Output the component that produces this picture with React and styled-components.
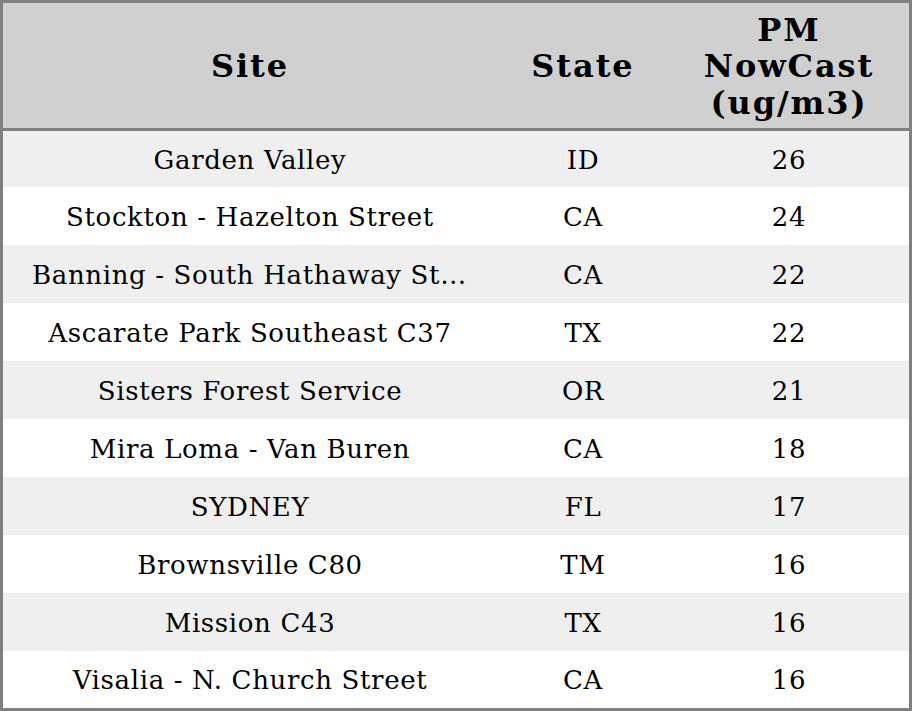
import React from "react";
import styled, { createGlobalStyle } from "styled-components";

const Global = createGlobalStyle`
  html, body { margin: 0; padding: 0; background: #fff; }
  body { font-family: "DejaVu Serif", serif; }
`;

const Table = styled.div`
  width: 912px;
  box-sizing: border-box;
  border: 3px solid #808080;
  display: grid;
  grid-template-columns: 494px 172px 240px;
  font-family: "DejaVu Serif", serif;
  color: #000;
`;

const HeadCell = styled.div`
  background: #d0d0d0;
  height: 123px;
  padding-top: 2px;
  border-bottom: 3px solid #808080;
  display: flex;
  align-items: center;
  justify-content: center;
  text-align: center;
  font-size: 32px;
  font-weight: bold;
  letter-spacing: 1.9px;
  line-height: 36.5px;
`;

const Cell = styled.div`
  background: ${(p) => (p.$alt ? "#efefef" : "#ffffff")};
  height: ${(p) => p.$h - 1}px;
  padding: 1px 29px 0;
  line-height: ${(p) => p.$h}px;
  min-width: 0;
  font-size: 26px;
  letter-spacing: 0.65px;
  text-align: center;
  white-space: nowrap;
  overflow: hidden;
  text-overflow: ellipsis;
`;

const rows = [
  ["Garden Valley", "ID", "26"],
  ["Stockton - Hazelton Street", "CA", "24"],
  ["Banning - South Hathaway Street", "CA", "22"],
  ["Ascarate Park Southeast C37", "TX", "22"],
  ["Sisters Forest Service", "OR", "21"],
  ["Mira Loma - Van Buren", "CA", "18"],
  ["SYDNEY", "FL", "17"],
  ["Brownsville C80", "TM", "16"],
  ["Mission C43", "TX", "16"],
  ["Visalia - N. Church Street", "CA", "16"],
];

const heights = [56, 58, 58, 58, 58, 58, 58, 58, 58, 57];

export default function App() {
  return (
    <>
      <Global />
      <Table>
        <HeadCell>Site</HeadCell>
        <HeadCell>State</HeadCell>
        <HeadCell>
          PM
          <br />
          NowCast
          <br />
          (ug/m3)
        </HeadCell>
        {rows.map((r, i) =>
          r.map((v, j) => (
            <Cell key={`${i}-${j}`} $alt={i % 2 === 0} $h={heights[i]}>
              {v}
            </Cell>
          ))
        )}
      </Table>
    </>
  );
}
